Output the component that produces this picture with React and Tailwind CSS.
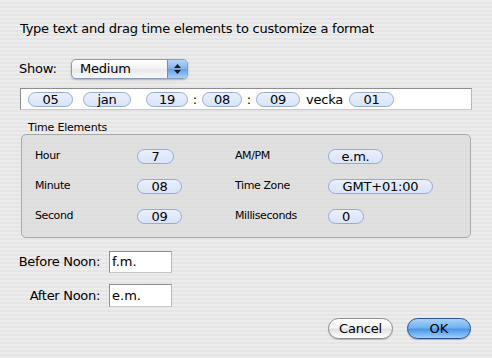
import React from "react";

const font = { fontFamily: '"DejaVu Sans", "Lucida Grande", sans-serif' };

function Token({ children, w }) {
  return (
    <div
      className={`${w} h-[15px] shrink-0 rounded-full border border-[#97abd6] bg-[linear-gradient(to_bottom,#e9f0fd,#d9e4f9)] flex items-center justify-center text-[13px] tracking-[-0.2px] leading-none text-black`}
    >
      {children}
    </div>
  );
}

function Colon() {
  return <span className="w-[14px] text-center text-[13px] leading-none">:</span>;
}

export default function App() {
  return (
    <div
      className="w-[492px] h-[358px] overflow-hidden bg-[repeating-linear-gradient(to_bottom,#ececec_0px,#ececec_2px,#e5e5e5_2px,#e5e5e5_4px)] text-black flex flex-col pt-[21px] whitespace-nowrap"
      style={font}
    >
      <div className="pl-[20px] text-[13px] leading-[16px] tracking-[-0.25px]">
        Type text and drag time elements to customize a format
      </div>

      <div className="mt-[22px] pl-[19px] flex items-center h-[20px]">
        <span className="text-[13px] w-[52px] tracking-[-0.2px]">Show:</span>
        <div className="w-[117px] h-[20px] rounded-[5px] border border-[#8a9ab8] shadow-[0_1px_2px_rgba(0,0,0,0.25)] flex overflow-hidden bg-[linear-gradient(to_bottom,#ffffff,#f2f2f2_50%,#e8e8e8_51%,#fafafa)]">
          <div className="flex-1 pl-[8px] flex items-center text-[13px] tracking-[-0.2px]">Medium</div>
          <div className="w-[20px] border-l border-[#6f8fc4] bg-[linear-gradient(to_bottom,#b5d5f8,#7eb3ee_50%,#5d9deb_51%,#a7d2fb)] flex flex-col items-center justify-center gap-[2px]">
            <svg width="7" height="4" viewBox="0 0 7 4"><path d="M3.5 0 L7 4 L0 4 Z" fill="#1a1a1a" /></svg>
            <svg width="7" height="4" viewBox="0 0 7 4"><path d="M0 0 L7 0 L3.5 4 Z" fill="#1a1a1a" /></svg>
          </div>
        </div>
      </div>

      <div className="mt-[9px] ml-[20px] w-[452px] h-[22px] bg-white border border-[#8e8e8e] border-b-[#c8c8c8] border-r-[#b8b8b8] flex items-center pl-[7px]">
        <Token w="w-[45px]">05</Token>
        <div className="w-[10px]" />
        <Token w="w-[48px]">jan</Token>
        <div className="w-[15px]" />
        <Token w="w-[42px]">19</Token>
        <Colon />
        <Token w="w-[40px]">08</Token>
        <Colon />
        <Token w="w-[44px]">09</Token>
        <span className="text-[13px] leading-none px-[6px] tracking-[-0.2px]">vecka</span>
        <Token w="w-[45px]">01</Token>
      </div>

      <div className="mt-[11px] pl-[28px] text-[11px] leading-[13px] tracking-[-0.2px]">Time Elements</div>

      <div className="ml-[21px] w-[450px] h-[104px] rounded-[5px] border border-[#a9a9a9] bg-[#dcdcdc]/70 pt-[6px] pl-[13px]">
        <div className="grid grid-cols-[102px_98px_93px_auto] grid-rows-[30px_30px_30px] items-center text-[11px] tracking-[-0.4px]">
          <span>Hour</span>
          <Token w="w-[37px]">7</Token>
          <span>AM/PM</span>
          <Token w="w-[55px]">e.m.</Token>

          <span>Minute</span>
          <Token w="w-[45px]">08</Token>
          <span>Time Zone</span>
          <Token w="w-[105px]">GMT+01:00</Token>

          <span>Second</span>
          <Token w="w-[45px]">09</Token>
          <span>Milliseconds</span>
          <Token w="w-[36px]">0</Token>
        </div>
      </div>

      <div className="mt-[13px] pl-[10px] flex items-center">
        <span className="w-[90px] text-right text-[13px] tracking-[-0.3px]">Before Noon:</span>
        <div className="ml-[9px] w-[63px] h-[22px] bg-white border border-[#8e8e8e] border-b-[#c8c8c8] border-r-[#b8b8b8] flex items-center pl-[2px] text-[13px]">
          f.m.
        </div>
      </div>

      <div className="mt-[11px] pl-[10px] flex items-center">
        <span className="w-[90px] text-right text-[13px] tracking-[-0.3px]">After Noon:</span>
        <div className="ml-[9px] w-[63px] h-[23px] bg-white border border-[#8e8e8e] border-b-[#c8c8c8] border-r-[#b8b8b8] flex items-center pl-[2px] text-[13px]">
          e.m.
        </div>
      </div>

      <div className="mt-[11px] pr-[21px] flex justify-end gap-[14px]">
        <button className="w-[65px] h-[21px] rounded-full border border-[#8c8c8c] bg-[linear-gradient(to_bottom,#ffffff,#f4f4f4_45%,#e2e2e2_55%,#ffffff)] shadow-[0_1px_1px_rgba(0,0,0,0.2)] text-[13px] leading-none flex items-center justify-center tracking-[-0.2px]">
          Cancel
        </button>
        <button className="w-[64px] h-[21px] rounded-full border border-[#27508f] bg-[linear-gradient(to_bottom,#a9d2f8,#72b2f0_45%,#4b97ea_55%,#9bd0fd)] shadow-[0_1px_1px_rgba(0,0,0,0.25)] text-[13px] leading-none flex items-center justify-center">
          OK
        </button>
      </div>
    </div>
  );
}
